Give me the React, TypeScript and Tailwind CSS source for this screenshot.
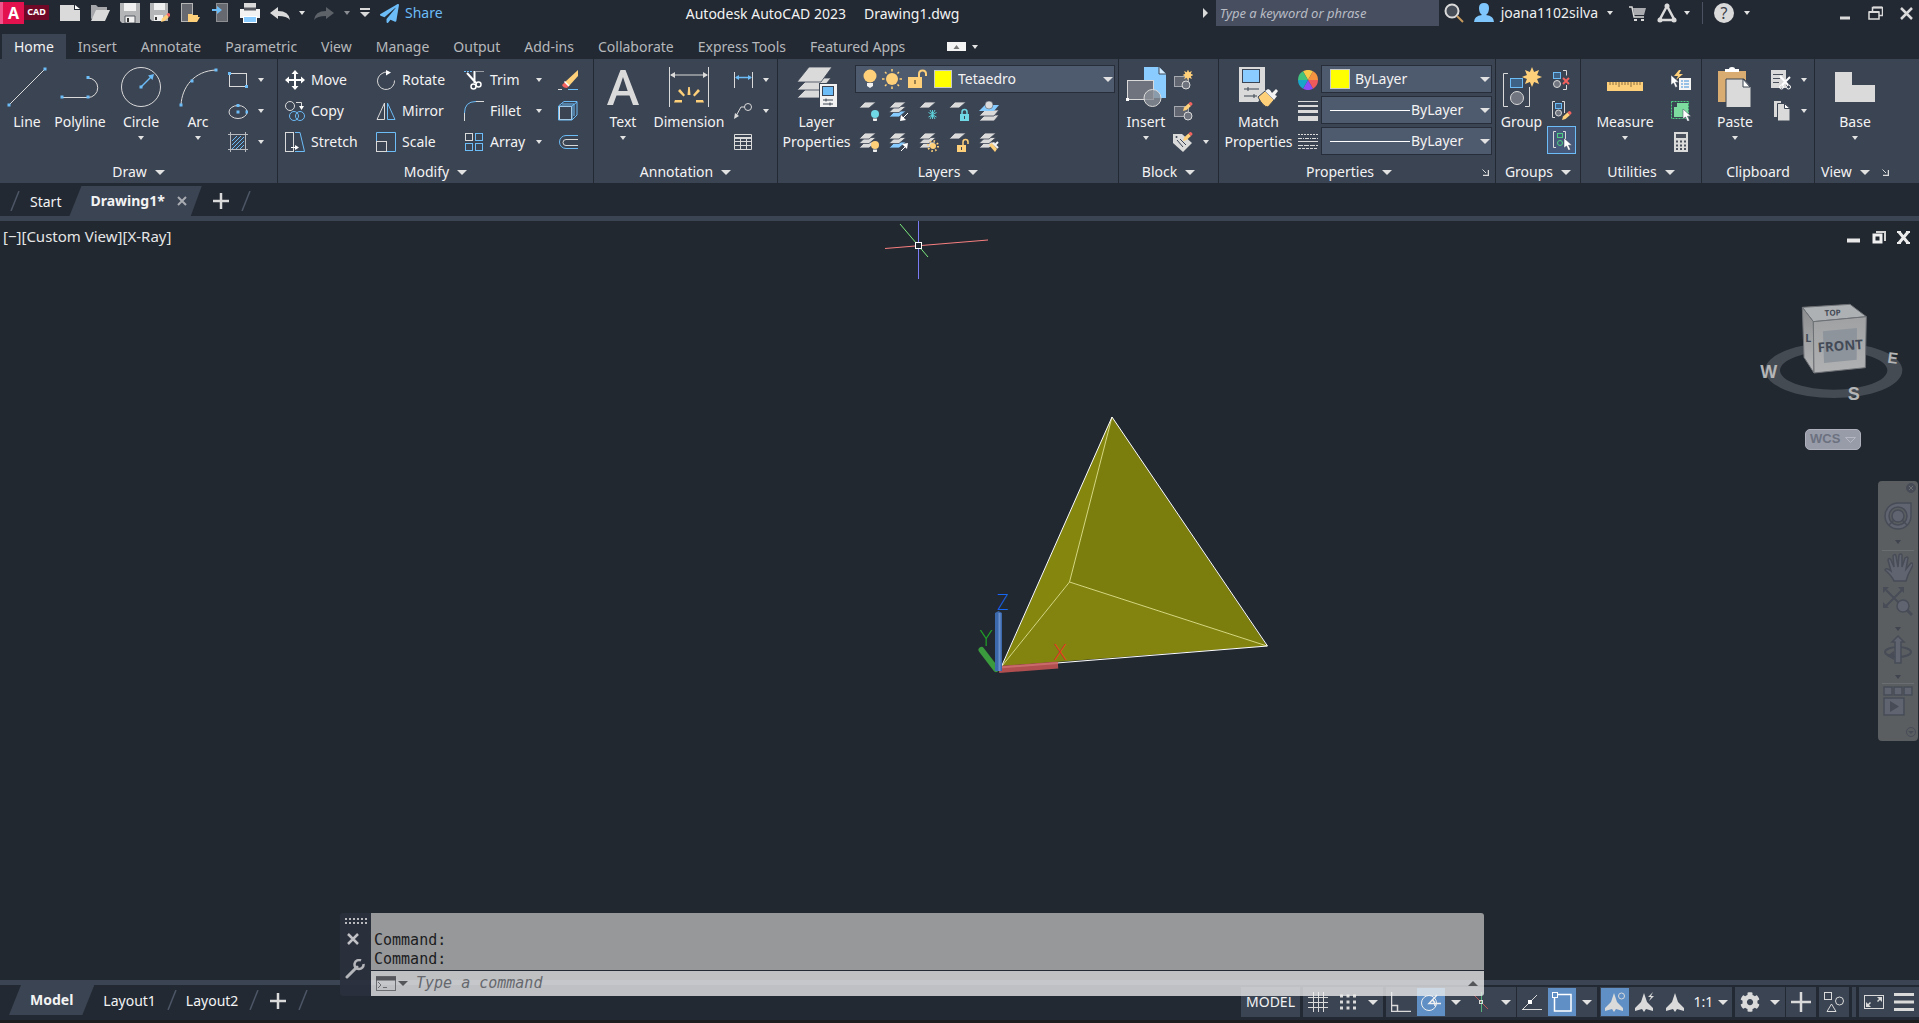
import type { ReactNode } from 'react';
import { FaCog, FaPaperPlane } from 'react-icons/fa';

const G = '#dadada';
const B = '#6cbcf7';
const Y = '#ffd07a';

type IconProps = { w?: number; h?: number; vb?: string; children: ReactNode };

function Icon({ w = 20, h = w, vb, children }: IconProps) {
    return (
        <svg
            className="shrink-0"
            width={w}
            height={h}
            viewBox={vb ?? `0 0 ${w} ${h}`}
            fill="none"
            stroke={G}
            aria-hidden="true"
        >
            {children}
        </svg>
    );
}

function Caret({ wide = false, dim = false, up = false }: { wide?: boolean; dim?: boolean; up?: boolean }) {
    return (
        <Icon w={wide ? 10 : 6} h={wide ? 5 : 4} vb={up ? '0 0 10 5' : wide ? '0 0 10 5' : '0 0 6 4'}>
            <path
                d={up ? 'M5 0L10 5H0z' : wide ? 'M0 0H10L5 5z' : 'M0 0H6L3 4z'}
                fill={up ? '#55565a' : dim ? '#8b8e93' : '#e2e2e2'}
                stroke="none"
            />
        </Icon>
    );
}

// square grip shown on the end points of drawing icons
function Grip({ x, y }: { x: number; y: number }) {
    return <rect x={x - 1.5} y={y - 1.5} width="3" height="3" fill={B} stroke="none" />;
}

function Pencil({ x, y }: { x: number; y: number }) {
    return (
        <g transform={`translate(${x} ${y})`} stroke="none">
            <path d="M0 9l1-3.500L5.500 1.500 8 4 3.500 8z" fill={Y} />
            <path d="M5.500 1.500L7 0q2.500 0 2.500 2.500L8 4z" fill="#f2625f" />
        </g>
    );
}

function Cursor({ x, y }: { x: number; y: number }) {
    return (
        <path
            transform={`translate(${x} ${y})`}
            d="M0 0v10l2.500-2 2 4.500 2-1L4.500 7.200H8z"
            fill="#fff"
            stroke="#3b4453"
            strokeWidth=".5"
        />
    );
}

function Burst({ x, y, r }: { x: number; y: number; r: number }) {
    const pts = Array.from({ length: 16 }, (_, i) => {
        const a = (i * Math.PI) / 8;
        const d = i % 2 ? r * 0.55 : r;
        return `${x + d * Math.sin(a)},${y - d * Math.cos(a)}`;
    }).join(' ');
    return <polygon points={pts} fill={Y} stroke="none" />;
}

/* ---------- layer glyph parts ---------- */

function Sheet({ y, fill = G }: { y: number; fill?: string }) {
    return <path d={`M0 ${y + 6}L6 ${y}H17L10 ${y + 6}z`} fill={fill} stroke="#3b4453" strokeWidth=".8" />;
}

function Stack({ blue = false }: { blue?: boolean }) {
    return (
        <>
            <Sheet y={10} fill={blue ? '#86cbff' : G} />
            <Sheet y={5.5} />
            <Sheet y={1} />
        </>
    );
}

function Bulb({ x, y, fill }: { x: number; y: number; fill: string }) {
    return (
        <g stroke="none">
            <circle cx={x} cy={y} r="4" fill={fill} />
            <path d={`M${x - 2} ${y + 4.500}h4v2l-2 2-2-2z`} fill="#f0f0f0" />
        </g>
    );
}

function Padlock({ x, y, fill, open = false }: { x: number; y: number; fill: string; open?: boolean }) {
    return (
        <g>
            <rect x={x} y={y} width="9" height="7" fill={fill} stroke="none" />
            <path
                d={open ? `M${x + 6} ${y}v-3q0-2.500 2.500-2.500t2.500 2.500v2` : `M${x + 2} ${y}v-2q0-2.500 2.500-2.500t2.500 2.500v2`}
                stroke={fill}
                strokeWidth="1.500"
            />
            <path d={`M${x + 4.500} ${y + 2}v3`} stroke="#3b4453" />
        </g>
    );
}

const bigIcons = {
    line: <Icon w={40}><path d="M2 38L38 2" /><Grip x={2} y={38} /><Grip x={38} y={2} /></Icon>,
    polyline: (
        <Icon w={40}>
            <path d="M2 30.500H28a9.500 9.500 0 000-19.500" />
            <Grip x={2} y={30} /><Grip x={28} y={30} /><Grip x={28} y={10.5} />
        </Icon>
    ),
    circle: (
        <Icon w={40}>
            <circle cx="20" cy="20" r="19.500" />
            <path d="M20 20L30 10" stroke={B} strokeWidth="1.500" />
            <path d="M33 7l-1.500 6-4.500-4.500z" fill={B} stroke="none" />
            <Grip x={20} y={20} />
        </Icon>
    ),
    arc: (
        <Icon w={40}>
            <path d="M3 38C4 20 16 4 38 3" />
            <Grip x={3} y={38} /><Grip x={14} y={14} /><Grip x={38} y={3} />
        </Icon>
    ),
    text: <Icon w={40}><path d="M4 38L17.500 3h5L36 38h-6l-3.500-9.500h-13L10 38zM15.300 24h9.400L20 10z" fill={G} stroke="none" /></Icon>,
    dimension: (
        <Icon w={40}>
            <path d="M.5 0v40M39.500 0v40M2 8h36" />
            <path d="M1 8l5-3v6zM39 8l-5-3v6z" fill={G} stroke="none" />
            <g fill={Y} stroke="none">
                <path d="M18.500 28l.7-8h1.600l.7 8zM9 24l2-2 5 6-1.500 1.500zM31 24l-2-2-5 6 1.500 1.500zM6 33h7v2.500H5zM34 33h-7v2.500h8z" />
            </g>
        </Icon>
    ),
    layer: (
        <Icon w={40}>
            <g fill={G} stroke="#3b4453" strokeWidth=".8">
                <path d="M0 31L12 19H34L24 31z" />
                <path d="M0 23L12 11H34L24 23z" />
                <path d="M0 15L12 0H35L24 15z" />
            </g>
            <rect x="22.500" y="16.500" width="18" height="24" fill="#f2f2f2" stroke="#3b4453" />
            <rect x="25.500" y="19.500" width="11" height="9" fill={B} stroke="#3b4453" />
            <path d="M26 33h10M26 37h10M29 31.500v3M33 35.500v3" stroke="#3b4453" />
        </Icon>
    ),
    insert: (
        <Icon w={40}>
            <path d="M18 0H33L40 7V31H18z" fill="#8accff" stroke="none" />
            <path d="M33 0v7h7" fill="#d6edff" stroke="#3b4453" />
            <rect x="1.500" y="13.500" width="26" height="19" fill="#6f737d" />
            <circle cx="26.500" cy="31" r="8.500" fill="#8a8e96" fillOpacity=".8" />
            <rect x="0" y="31" width="3" height="3" fill="#fff" stroke="none" />
        </Icon>
    ),
    match: (
        <Icon w={40}>
            <path d="M0 0H26V26L19 35H0z" fill={G} stroke="none" />
            <rect x="3.500" y="2.500" width="17" height="13" fill="#8accff" stroke="#3b4453" />
            <path d="M5 22h15M5 29h13M9 20v4M15 27v4" stroke="#3b4453" />
            <path d="M19 30l7-6 9 9-6 7q-5 0-10-10z" fill={Y} stroke="#3b4453" />
            <path d="M26 24l3-2 2 1 2 3 4-4 2 2-3 4 2 1-3 4z" fill="#f4f4f4" stroke="none" />
        </Icon>
    ),
    group: (
        <Icon w={40}>
            <path d="M6 6.500H1.500v33H6M23 39.500h4.500V20" />
            <rect x="8.500" y="11.500" width="12" height="9" fill="#3d6285" stroke={B} />
            <circle cx="15" cy="31" r="6.500" fill="#70757f" />
            <Burst x={30} y={10} r={10} />
        </Icon>
    ),
    measure: (
        <Icon w={40}>
            <rect x="2" y="15" width="36" height="9" fill={Y} stroke="none" />
            <path d="M5 15v3M8 15v3M11 15v3M14 15v5M17 15v3M20 15v3M23 15v3M26 15v5M29 15v3M32 15v3M35 15v3" stroke="#8a6f3d" />
        </Icon>
    ),
    paste: (
        <Icon w={40}>
            <rect x="3" y="4" width="28" height="31" fill="#d9ad72" stroke="none" />
            <path d="M10 5V2h4q0-2 3-2t3 2h4v3z" fill="#fff" stroke="none" />
            <path d="M11 12H29L36 20V41H11z" fill={G} stroke="#3b4453" />
            <path d="M28 12v8h7z" fill="#fff" stroke="#3b4453" />
        </Icon>
    ),
    base: <Icon w={40}><path d="M0 5H17V18H40V35H0z" fill={G} stroke="none" /></Icon>,
};

const icons = {
    rect: <Icon><rect x="1.500" y="3.500" width="17" height="13" /><Grip x={1.5} y={3.5} /><Grip x={18.5} y={16.5} /></Icon>,
    ellipse: <Icon><ellipse cx="10" cy="11" rx="9" ry="6.500" /><Grip x={10} y={4.5} /><Grip x={10} y={11} /><Grip x={19} y={11} /></Icon>,
    hatch: (
        <Icon>
            <path d="M4 9l5-5M4 13l9-9M4 17L16 5M8 17l8-8M12 17l4-4" stroke={B} />
            <path d="M2.500 0v20M17.500 0v20M0 2.500h20M0 17.500h20" stroke="#b8bbc0" />
        </Icon>
    ),
    move: <Icon><path d="M10 3v14M3 10h14" stroke="#fff" strokeWidth="2" /><path d="M10 0l3.500 4h-7zM10 20l3.500-4h-7zM0 10l4-3.500v7zM20 10l-4-3.500v7z" fill="#fff" stroke="none" /></Icon>,
    copy: (
        <Icon>
            <circle cx="5" cy="5" r="4.500" />
            <path d="M11 1.500h5.500V6" /><path d="M14 5h5l-2.500 4z" fill="#fff" stroke="none" />
            <circle cx="9" cy="15" r="4.500" stroke={B} /><circle cx="15" cy="15" r="4.500" stroke={B} />
        </Icon>
    ),
    stretch: (
        <Icon>
            <path d="M10 .5h5L19.500 19.500H10" stroke={B} />
            <rect x=".5" y=".5" width="8" height="19" />
            <path d="M6 15.500h5" stroke="#fff" /><path d="M10 13l4 2.500-4 2.500z" fill="#fff" stroke="none" />
        </Icon>
    ),
    rotate: <Icon><path d="M6 3.500A8.500 8.500 0 1018.500 10.500" /><path d="M6 3.500Q8 2 11 2" /><path d="M10 0l5 2.500-5 3z" fill="#fff" stroke="none" /></Icon>,
    mirror: <Icon><path d="M8.500 2v16.500H1z" /><path d="M11.500 2v16.500H19z" stroke={B} /></Icon>,
    scale: <Icon><path d="M.5 10V.5h19v19H11" stroke={B} /><rect x=".5" y="9.500" width="10" height="10" /></Icon>,
    trim: (
        <Icon>
            <path d="M0 1.500h9" stroke={B} strokeDasharray="2 1" /><path d="M12 1.500h8" stroke="#9a9da3" />
            <path d="M3 3l9 10M10.500 1v12" stroke="#fff" strokeWidth="2" />
            <circle cx="9.500" cy="16.500" r="2.500" stroke="#fff" strokeWidth="1.500" /><circle cx="14.500" cy="14.500" r="2.500" stroke="#fff" strokeWidth="1.500" />
        </Icon>
    ),
    fillet: <Icon><path d="M12 .5h8M.5 12v8" /><path d="M.5 12Q.5 .5 12 .5" stroke={B} /></Icon>,
    array: <Icon><rect x="1.500" y="1.500" width="7" height="7" /><g stroke={B}><rect x="11.500" y="1.500" width="7" height="7" /><rect x="1.500" y="11.500" width="7" height="7" /><rect x="11.500" y="11.500" width="7" height="7" /></g></Icon>,
    erase: (
        <Icon>
            <path d="M20 0v6L11 16l-4-4z" fill={Y} stroke="none" /><path d="M7 12l4 4-2 2q-4 0-5-3z" fill="#f2625f" stroke="none" />
            <path d="M6.500 11.500l4.500 4.500" stroke="#fff" strokeWidth="1.500" />
            <path d="M0 19.500h4" /><path d="M10 19.500h10" stroke={B} />
        </Icon>
    ),
    explode: <Icon><rect x="1.500" y="5.500" width="12" height="13" /><path d="M.5 19V5L6 .5h13V14l-5 5zM1 5h13l5-4M14 5v14M4 3h12v12" stroke={B} /></Icon>,
    offset: <Icon><path d="M20 3.500H8a6.500 6.500 0 000 13h12" stroke={B} /><path d="M20 7.500H8a3 3 0 000 6h12" /></Icon>,
    linear: <Icon><path d="M1.500 2v16M19.500 2v16" /><path d="M3 7.500h15" stroke={B} strokeWidth="1.500" /><path d="M2 7.500l4-2.500v5zM19 7.500l-4-2.500v5z" fill={B} stroke="none" /></Icon>,
    leader: <Icon><circle cx="15" cy="6" r="3.500" /><path d="M11.500 6H8L3 15" /><path d="M1 18l1-6 4 3z" fill={G} stroke="none" /></Icon>,
    table: <Icon><path d="M1.500 2.500h17v15h-17zM1 9.500h18M1 13.500h18M7.500 7v11M13.500 7v11" /><path d="M1 6h18" strokeWidth="2" /></Icon>,
    layOff: <Icon><Sheet y={1} /><Bulb x={16} y={13} fill="#6fd8e4" /></Icon>,
    layIso: <Icon><Stack blue /><path d="M19 12l-5 5" stroke="#fff" /><path d="M11 20l1-6 5 5z" fill="#fff" stroke="none" /></Icon>,
    layFreeze: <Icon><Sheet y={1} /><path d="M13.500 9v9M9.500 11.500l8 4.500M17.500 11.500l-8 4.500M11 9l5 9M16 9l-5 9" stroke="#5ecfd8" /></Icon>,
    layLock: <Icon><Sheet y={1} /><Padlock x={11} y={13} fill="#6fd8e4" /></Icon>,
    layCurrent: (
        <Icon>
            <g fill={G} stroke="#3b4453" strokeWidth=".8">
                <path d="M0 20l6-6h14l-5 6z" /><path d="M0 15l6-6h14l-5 6z" />
            </g>
            <path d="M0 10l6-6h14l-5 6z" fill="#86cbff" stroke="none" />
            <circle cx="10" cy="4" r="4" fill={G} stroke="#3b4453" strokeWidth=".5" />
        </Icon>
    ),
    layOn: <Icon><Stack /><Bulb x={16} y={13} fill={Y} /></Icon>,
    layUniso: <Icon><Stack blue /><path d="M12 19l5-5" stroke="#fff" /><path d="M19 11l-1 6-5-5z" fill="#fff" stroke="none" /></Icon>,
    layThaw: <Icon><Stack /><circle cx="14" cy="14" r="3" fill={Y} stroke="none" /><circle cx="14" cy="14" r="5" stroke={Y} strokeWidth="2" strokeDasharray="1.500 2.420" /></Icon>,
    layUnlock: <Icon><Sheet y={1} /><Padlock x={8} y={13} fill={Y} open /></Icon>,
    layMatch: <Icon><Stack /><path d="M10 13l3-2 5 6-2 3z" fill={Y} stroke="none" /><path d="M14 11l5 5M19 10l-3 3" stroke="#f4f4f4" strokeWidth="2" /></Icon>,
    blkCreate: <Icon><rect x="1.500" y="6.500" width="14" height="10" fill="#60656f" stroke="#a5a8ae" /><circle cx="13" cy="15" r="4" fill="#6f737d" /><Burst x={15} y={5} r={5.5} /></Icon>,
    blkEdit: <Icon><rect x="1.500" y="5.500" width="14" height="10" fill="#60656f" stroke="#a5a8ae" /><circle cx="15" cy="15" r="4" fill="#6f737d" /><Pencil x={10} y={1} /></Icon>,
    blkAttr: <Icon><path d="M0 2h9l10 9-9 9L0 11z" fill={G} stroke="none" /><path d="M4 8l6 7M7 7l6 6" stroke="#3b4453" /><circle cx="3.500" cy="5" r="1" fill="#3b4453" stroke="none" /><Pencil x={10} y={0} /></Icon>,
    colors: (
        <Icon>
            <g stroke="none">
                <path d="M10 10L5 1.340A10 10 0 0115 1.340z" fill="#f7c948" />
                <path d="M10 10L15 1.340A10 10 0 0120 10z" fill="#f59440" />
                <path d="M10 10H20A10 10 0 0115 18.660z" fill="#ef5a5a" />
                <path d="M10 10L15 18.660A10 10 0 015 18.660z" fill="#8b4df5" />
                <path d="M10 10L5 18.660A10 10 0 010 10z" fill="#18a6c9" />
                <path d="M10 10H0A10 10 0 015 1.340z" fill="#43c27b" />
            </g>
        </Icon>
    ),
    weights: <Icon><path d="M0 .5h20" /><path d="M0 5h20" strokeWidth="2" /><path d="M0 10.500h20" strokeWidth="3" /><path d="M0 17.500h20" strokeWidth="5" /></Icon>,
    types: <Icon><path d="M0 2.500h20" strokeDasharray="2 1" /><path d="M0 6.500h20" strokeDasharray="4 1 1 1" /><path d="M0 9.500h20" /><path d="M0 13.500h20" strokeDasharray="5 1" /><path d="M0 16.500h20" strokeDasharray="3 1" /></Icon>,
    ungroup: <Icon><rect x="1.500" y="2.500" width="7" height="6" fill="#3d6285" stroke={B} /><circle cx="5" cy="14" r="3.500" fill="#70757f" /><path d="M11 .5h3.500v5M14.500 15v4.500H11" /><path d="M11 8l6 6M17 8l-6 6" stroke="#f2625f" strokeWidth="2" /></Icon>,
    groupEdit: <Icon><path d="M3 .5H.5v16H3M10 .5h2.500V12" /><rect x="3.500" y="2.500" width="6" height="5" fill="#3d6285" stroke={B} /><circle cx="6.500" cy="12" r="3" fill="#70757f" /><Pencil x={10} y={10} /></Icon>,
    groupSelect: <Icon><path d="M4 1.500H1.500v16H4M11 1.500h2.500V9" /><rect x="5.500" y="3.500" width="5" height="4" stroke="#4fcf83" /><circle cx="8" cy="13" r="2.500" stroke="#4fcf83" /><Cursor x={12} y={8} /></Icon>,
    quick: <Icon><path d="M8 0L3 6h4L5 10l7-6H8l2-4z" fill={Y} stroke="none" /><Cursor x={0} y={5} /><rect x="8" y="8" width="12" height="12" fill="#f4f4f4" stroke="none" /><path d="M10 11h2M10 14h2M10 17h2M13 11h5M13 14h5M13 17h5" stroke="#3b8fd8" /></Icon>,
    selectAll: <Icon><rect x=".5" y=".5" width="17" height="17" stroke="#4fcf83" strokeDasharray="2 1" /><path d="M3 6h3V2h11v11h-3v3H3z" fill="#7ddba0" stroke="none" /><Cursor x={12} y={8} /></Icon>,
    calc: <Icon><rect x="3" y="0" width="14" height="20" fill={G} stroke="none" /><rect x="5" y="2" width="10" height="4" fill="#4a505b" stroke="none" /><path d="M5 9.500h10M5 13.500h10M5 17h10" stroke="#4a505b" strokeWidth="2" strokeDasharray="2 2" /></Icon>,
    cut: <Icon><path d="M0 0h15v18H0z" fill={G} stroke="none" /><path d="M2 4.500h10M2 8.500h7M2 12.500h6" stroke="#4a505b" /><path d="M9 6l8 9M19 7l-8 8" stroke="#fff" strokeWidth="2" /><circle cx="10.500" cy="17" r="2" stroke="#fff" /><circle cx="17.500" cy="17" r="2" stroke="#fff" /></Icon>,
    copyclip: <Icon><path d="M3 0h7v16H3z" fill={G} stroke="none" /><path d="M6.500 2.500H14l5 5V20H6.500z" fill={G} stroke="#3b4453" /><path d="M13.500 2.500v5H19z" fill="#fff" stroke="#3b4453" /></Icon>,
};

const quickAccess: [string, ReactNode][] = [
    ['New', <Icon><path d="M0 2h14v5h6v11H0z" fill={G} stroke="none" /><path d="M15 2l5 4h-5z" fill="#fff" stroke="none" /></Icon>],
    ['Open', <Icon><path d="M1 16V2h5l2 2h9v4" fill="#a5a7aa" stroke="none" /><path d="M1 18L6 7h14l-5 11z" fill={G} stroke="none" /></Icon>],
    ['Save', <Icon><path d="M0 0h20v20H2l-2-2z" fill="#b4b5b7" stroke="none" /><path d="M4 0h12v8H4z" fill="#f0f0f0" stroke="none" /><path d="M5 13h10v7H5z" fill="#f0f0f0" stroke="#55585e" /><path d="M8 15v4" stroke="#333" strokeWidth="2" /></Icon>],
    ['Save As', <Icon><path d="M0 0h18v18H2l-2-2z" fill="#b4b5b7" stroke="none" /><path d="M4 0h11v7H4z" fill="#f0f0f0" stroke="none" /><path d="M4 12h9v6H4z" fill="#f0f0f0" stroke="none" /><path d="M6 14v3" stroke="#333" strokeWidth="2" /><Pencil x={11} y={10} /></Icon>],
    ['Open from Web & Mobile', <Icon><rect x="1.500" y=".5" width="11" height="18" fill="#66696f" stroke="#b5b5b5" /><path d="M8 19v-8h4l1 1h5v2h2l-3 5z" fill={Y} stroke="none" /></Icon>],
    ['Save to Web & Mobile', <Icon><rect x="6.500" y=".5" width="11" height="18" fill="#66696f" stroke="#8d8f93" /><path d="M2 7h6" stroke={B} strokeWidth="2" /><path d="M7 3l5 4-5 4z" fill={B} stroke="none" /></Icon>],
    ['Plot', <Icon><path d="M4 0h12v5H4z" fill={G} stroke="none" /><path d="M0 6h20v9H0z" fill="#f2f2f2" stroke="none" /><path d="M4 4.500h12v3H4z" fill="#55585e" stroke="none" /><rect x="3.500" y="13.500" width="13" height="6" fill="#8accff" stroke="#fff" /></Icon>],
];

function BigButton({ icon, lines, caret = false, className }: { icon: ReactNode; lines: string[]; caret?: boolean; className: string }) {
    return (
        <button className={`flex shrink-0 flex-col items-center self-start pt-[3px] ${className}`}>
            {icon}
            <span className="mt-[5px] leading-5 whitespace-nowrap">
                {lines.map((l) => <span key={l} className="block">{l}</span>)}
            </span>
            {caret && <span className="mt-1"><Caret /></span>}
        </button>
    );
}

function SmallColumn({ items, className = '' }: { items: [string, ReactNode, boolean?][]; className?: string }) {
    return (
        <div className={`flex flex-col ${className}`}>
            {items.map(([name, icon, caret]) => (
                <div key={name} className="flex h-[31px] items-center gap-[10px]">
                    <button aria-label={name}>{icon}</button>
                    {caret && <button aria-label={`${name} options`}><Caret /></button>}
                </div>
            ))}
        </div>
    );
}

function Panel({ title, className, menu = true, launcher = false, start = false, children }: {
    title: string; className: string; menu?: boolean; launcher?: boolean; start?: boolean; children: ReactNode;
}) {
    return (
        <section className={`relative flex flex-col border-[#222933] pt-[5px] ${className}`}>
            <div className="flex h-[93px]">{children}</div>
            <div className={`flex h-[26px] items-center gap-2 pt-1 ${start ? 'pl-[6px]' : launcher ? 'justify-center pr-4' : 'justify-center'}`}>
                <button className="flex items-center gap-2">{title}{menu && <Caret wide />}</button>
                {launcher && (
                    <button aria-label={`${title} settings`} className={start ? 'ml-1' : 'absolute right-1.5'}>
                        <Icon w={7}><path d="M.5 .5L4 4" /><path d="M6.500 1v5.500H1" strokeWidth="1.500" /></Icon>
                    </button>
                )}
            </div>
        </section>
    );
}

const modifyColumns: { className: string; tools: [string, ReactNode, boolean?][] }[] = [
    { className: 'w-[91px]', tools: [['Move', icons.move], ['Copy', icons.copy], ['Stretch', icons.stretch]] },
    { className: 'w-[88px]', tools: [['Rotate', icons.rotate], ['Mirror', icons.mirror], ['Scale', icons.scale]] },
    { className: 'w-[78px]', tools: [['Trim', icons.trim, true], ['Fillet', icons.fillet, true], ['Array', icons.array, true]] },
];

const layerTools: [string, ReactNode][][] = [
    [['Off', icons.layOff], ['Isolate', icons.layIso], ['Freeze', icons.layFreeze], ['Lock', icons.layLock], ['Make Current', icons.layCurrent]],
    [['Turn All On', icons.layOn], ['Unisolate', icons.layUniso], ['Thaw All', icons.layThaw], ['Unlock', icons.layUnlock], ['Match Layer', icons.layMatch]],
];

function Combo({ label, value, className, children }: { label: string; value: string; className: string; children: ReactNode }) {
    return (
        <label className={`my-px flex h-7 items-center border border-[#272e3a] bg-[#4e5a6e] ${className}`}>
            {children}
            <select aria-label={label} defaultValue={value} className="min-w-0 flex-1 appearance-none bg-transparent outline-none">
                <option>{value}</option>
            </select>
            <Caret wide />
        </label>
    );
}

function Ribbon() {
    return (
        <div className="flex h-[124px] bg-[#3b4453] text-[#f3f3f3]">
            <Panel title="Draw" className="w-[278px] border-r">
                <BigButton icon={bigIcons.line} lines={['Line']} className="w-[54px]" />
                <BigButton icon={bigIcons.polyline} lines={['Polyline']} className="w-[52px]" />
                <BigButton icon={bigIcons.circle} lines={['Circle']} caret className="w-[70px]" />
                <BigButton icon={bigIcons.arc} lines={['Arc']} caret className="w-11" />
                <SmallColumn className="pl-2" items={[['Rectangle', icons.rect, true], ['Ellipse', icons.ellipse, true], ['Hatch', icons.hatch, true]]} />
            </Panel>

            <Panel title="Modify" className="w-[316px] border-r">
                <div className="flex pl-[7px]">
                    {modifyColumns.map((col) => (
                        <div key={col.tools[0][0]} className={`flex flex-col ${col.className}`}>
                            {col.tools.map(([name, icon, caret]) => (
                                <div key={name} className="flex h-[31px] items-center justify-between">
                                    <button className="flex items-center gap-[6px]">{icon}{name}</button>
                                    {caret && <button aria-label={`${name} options`}><Caret /></button>}
                                </div>
                            ))}
                        </div>
                    ))}
                    <SmallColumn className="pl-4" items={[['Erase', icons.erase], ['Explode', icons.explode], ['Offset', icons.offset]]} />
                </div>
            </Panel>

            <Panel title="Annotation" className="w-[184px] border-r">
                <BigButton icon={bigIcons.text} lines={['Text']} caret className="w-[58px]" />
                <BigButton icon={bigIcons.dimension} lines={['Dimension']} className="w-[74px]" />
                <SmallColumn className="pl-[7px]" items={[['Linear', icons.linear, true], ['Leader', icons.leader, true], ['Table', icons.table]]} />
            </Panel>

            <Panel title="Layers" className="w-[341px] border-r">
                <BigButton icon={bigIcons.layer} lines={['Layer', 'Properties']} className="w-[77px]" />
                <div>
                    <Combo label="Layer" value="Tetaedro" className="mb-0.5 w-[260px] pr-px pl-[7px]">
                        <span className="mr-1.5 flex items-center gap-[5px]">
                            <Icon w={14} h={20}><circle cx="7" cy="7" r="6.500" fill={Y} stroke="none" /><path d="M4 14h6v3l-3 2-3-2z" fill="#f2f2f2" stroke="none" /></Icon>
                            <Icon>
                                <circle cx="10" cy="10" r="6" fill={Y} stroke="none" />
                                <path d="M10 0v2.500M10 17.500V20M0 10h2.500M17.500 10H20M3 3l1.500 1.500M15.500 15.500L17 17M17 3l-1.500 1.500M3 17l1.500-1.500" stroke={Y} strokeWidth="1.500" />
                            </Icon>
                            <Icon><rect x="1" y="8" width="14" height="11" fill={Y} stroke="none" /><path d="M12 8V5q0-3.500 3.500-3.500T19 5v2" stroke={Y} strokeWidth="2" /><path d="M8 11v4" stroke="#77663f" strokeWidth="1.500" /></Icon>
                            <span className="ml-0.5 size-[18px] border border-[#c9c9c9] bg-[#ffff00]" />
                        </span>
                    </Combo>
                    {layerTools.map((row) => (
                        <div key={row[0][0]} className="flex h-[31px] items-center gap-[10px] pl-1">
                            {row.map(([name, icon]) => <button key={name} aria-label={name}>{icon}</button>)}
                        </div>
                    ))}
                </div>
            </Panel>

            <Panel title="Block" className="w-[100px] border-r">
                <BigButton icon={bigIcons.insert} lines={['Insert']} caret className="w-[54px]" />
                <SmallColumn items={[['Create Block', icons.blkCreate], ['Edit Block', icons.blkEdit], ['Edit Attributes', icons.blkAttr, true]]} />
            </Panel>

            <Panel title="Properties" launcher className="w-[277px] border-r">
                <BigButton icon={bigIcons.match} lines={['Match', 'Properties']} className="w-[79px]" />
                <SmallColumn items={[['Colors', icons.colors], ['Lineweights', icons.weights], ['Linetypes', icons.types]]} />
                <div className="flex flex-col gap-px pl-[3px]">
                    <Combo label="Object color" value="ByLayer" className="w-[171px] pr-px pl-2">
                        <span className="mr-[5px] size-5 border border-[#c9c9c9] bg-[#ffff00]" />
                    </Combo>
                    <Combo label="Lineweight" value="ByLayer" className="w-[171px] pr-px pl-2">
                        <span className="mr-px h-px w-20 bg-white" />
                    </Combo>
                    <Combo label="Linetype" value="ByLayer" className="w-[171px] pr-px pl-2">
                        <span className="mr-px h-px w-20 bg-white" />
                    </Combo>
                </div>
            </Panel>

            <Panel title="Groups" className="w-[85px] border-r">
                <BigButton icon={bigIcons.group} lines={['Group']} className="w-[51px]" />
                <div className="flex flex-col items-center">
                    <button aria-label="Ungroup" className="flex h-[31px] items-center">{icons.ungroup}</button>
                    <button aria-label="Group Edit" className="flex h-[31px] items-center">{icons.groupEdit}</button>
                    <button aria-label="Group Selection" className="flex h-7 w-[29px] items-center justify-center border border-[#6cbcf7] bg-[#46597a]">{icons.groupSelect}</button>
                </div>
            </Panel>

            <Panel title="Utilities" className="w-[121px] border-r">
                <BigButton icon={bigIcons.measure} lines={['Measure']} caret className="w-[88px]" />
                <SmallColumn className="pl-0.5" items={[['Quick Select', icons.quick], ['Select All', icons.selectAll], ['Quick Calculator', icons.calc]]} />
            </Panel>

            <Panel title="Clipboard" menu={false} className="w-[113px] border-r">
                <BigButton icon={bigIcons.paste} lines={['Paste']} caret className="w-[66px]" />
                <SmallColumn className="pl-[3px]" items={[['Cut', icons.cut, true], ['Copy Clip', icons.copyclip, true]]} />
            </Panel>

            <Panel title="View" launcher start className="flex-1">
                <BigButton icon={bigIcons.base} lines={['Base']} caret className="w-20" />
            </Panel>
        </div>
    );
}

function TitleBar() {
    return (
        <header className="flex h-[34px] items-start justify-between">
            <div className="flex items-center">
                <div className="flex h-[26px] w-[60px] items-start pt-0.5 font-bold text-white">
                    <span className="flex h-[22px] w-6 items-center justify-center border-l-[3px] border-[#f0548a] bg-[#e3124f] text-base">A</span>
                    <span className="mt-[3px] flex h-[15px] w-[25px] items-center justify-center bg-[#6f0927] text-[9px]">CAD</span>
                </div>
                <div className="flex items-center gap-[10px]">
                    {quickAccess.map(([name, icon]) => <button key={name} aria-label={name}>{icon}</button>)}
                    <button aria-label="Undo"><Icon><path d="M0 10l8-6v4q11 0 12 9-3-4-12-4v3z" fill={G} stroke="none" /></Icon></button>
                    <button aria-label="Undo history" className="-mx-px"><Caret /></button>
                    <button aria-label="Redo"><Icon><path d="M20 10l-8-6v4Q1 8 0 17q3-4 12-4v3z" fill="#5d6269" stroke="none" /></Icon></button>
                    <button aria-label="Redo history"><Caret dim /></button>
                    <button aria-label="Customize toolbar"><Icon w={10}><path d="M0 1h10" strokeWidth="2" /><path d="M0 4h10L5 9z" fill={G} stroke="none" /></Icon></button>
                    <button className="flex items-center gap-[6px] text-[#6cbcf7]"><FaPaperPlane size={19} />Share</button>
                </div>
            </div>
            <h1 className="pt-1 text-[#f3f3f3]">Autodesk AutoCAD 2023<span className="ml-[18px]">Drawing1.dwg</span></h1>
            <div className="flex h-[26px] items-center text-[#f0f0f0]">
                <Icon w={5} h={10}><path d="M0 0l5 5-5 5z" fill={G} stroke="none" /></Icon>
                <input aria-label="Search" placeholder="Type a keyword or phrase" className="ml-2 h-[26px] w-[223px] bg-[#464e60] px-1 text-[13px] italic outline-none placeholder:text-[#b9bcc4]" />
                <button aria-label="Find" className="ml-[5px]"><Icon><circle cx="8" cy="8" r="6.500" fill="#474d57" strokeWidth="2" /><path d="M13 13l6 6" stroke="#c99a5e" strokeWidth="2" /></Icon></button>
                <button className="ml-[10px] flex items-center gap-[7px]">
                    <Icon><path d="M10 0q5 0 5 5t-3 7q8 1 8 7H0q0-6 8-7-3-2-3-7t5-5z" fill="#7fc6fd" stroke="none" /></Icon>
                    joana1102silva
                    <span className="ml-0.5"><Caret /></span>
                </button>
                <button aria-label="App Store" className="ml-4"><Icon w={18} h={20}><path d="M0 4h3l2 10h10" strokeWidth="1.500" /><path d="M4 5h13l-2 7H5z" fill="#a9abae" stroke="none" /><path d="M5 16h3v2H5zM12 16h3v2h-3z" fill={G} stroke="none" /></Icon></button>
                <button aria-label="Autodesk App" className="ml-[10px]"><Icon w={20}><path d="M10 3L2.500 17h15z" strokeWidth="2.500" /><circle cx="10" cy="3" r="2.500" fill={G} stroke="none" /><circle cx="3" cy="17" r="2.500" fill={G} stroke="none" /><circle cx="17" cy="17" r="2.500" fill={G} stroke="none" /></Icon></button>
                <button aria-label="App options" className="ml-[7px]"><Caret /></button>
                <span className="ml-3 h-[22px] w-px bg-[#4a5160]" />
                <button aria-label="Help" className="ml-[11px] flex size-5 items-center justify-center rounded-full bg-[#dadada] text-base leading-5 text-[#3a3f48]">?</button>
                <button aria-label="Help options" className="ml-[10px]"><Caret /></button>
                <button aria-label="Minimize" className="ml-[90px]"><Icon w={10} h={14}><path d="M0 12h10" strokeWidth="3" /></Icon></button>
                <button aria-label="Restore" className="ml-[18px]"><Icon w={15} h={14}><path d="M4.500 5V1.500h10v8H11" strokeWidth="1.500" /><rect x="1" y="6" width="10" height="7" strokeWidth="1.500" /><path d="M1 6h10M5 1.500h9" strokeWidth="2" /></Icon></button>
                <button aria-label="Close" className="mr-1.5 ml-[17px]"><Icon w={13}><path d="M1 1l11 11M12 1L1 12" strokeWidth="2.500" /></Icon></button>
            </div>
        </header>
    );
}

const ribbonTabs = ['Home', 'Insert', 'Annotate', 'Parametric', 'View', 'Manage', 'Output', 'Add-ins', 'Collaborate', 'Express Tools', 'Featured Apps'];

function Slash() {
    return <Icon w={10} h={20}><path d="M1 20L9 0" stroke="#4d5666" strokeWidth="1.500" /></Icon>;
}

function PlusIcon() {
    return <Icon w={16}><path d="M8 0v16M0 8h16" strokeWidth="2.500" /></Icon>;
}

function FileTabs() {
    return (
        <nav className="flex h-[38px] items-start border-b-[5px] border-[#3b4453] pt-[3px] text-[#f3f3f3]">
            <span className="mt-[5px] ml-[10px]"><Slash /></span>
            <button className="ml-[10px] h-8">Start</button>
            <div className="ml-2 flex h-[30px] items-center bg-[#3b4453] pr-[15px] pl-[21px] font-bold [clip-path:polygon(12px_0,100%_0,calc(100%-11px)_100%,0_100%)]">
                <button>Drawing1*</button>
                <button aria-label="Close Drawing1" className="ml-3"><Icon w={10}><path d="M1 1l8 8M9 1L1 9" stroke="#a9acb2" strokeWidth="2" /></Icon></button>
            </div>
            <button aria-label="New drawing" className="mt-[7px] ml-[11px]"><PlusIcon /></button>
            <span className="mt-[5px] ml-3"><Slash /></span>
        </nav>
    );
}

function ViewCube() {
    return (
        <div className="absolute top-[59px] right-0 flex w-[179px] flex-col items-center">
            <Icon w={179} h={133} vb="0 0 537 399">
                <defs>
                    <linearGradient id="cube-front" x1="0" y1="0" x2="0" y2="1">
                        <stop offset="0" stopColor="#9fa1a3" />
                        <stop offset="1" stopColor="#b0b1b2" />
                    </linearGradient>
                    <linearGradient id="cube-side" x1="0" y1="0" x2="0" y2="1">
                        <stop offset="0" stopColor="#8b8d8f" />
                        <stop offset="1" stopColor="#b5b6b7" />
                    </linearGradient>
                </defs>
                <path
                    d="M75 271a206 83 0 01412 0a206 83 0 01-412 0zM120 271a161 58 0 00322 0a161 58 0 00-322 0z"
                    fill="#454b53"
                    fillRule="evenodd"
                    stroke="none"
                />
                <g stroke="#6d7075" strokeWidth="3">
                    <path d="M187 82L330 73 379 110 220 125z" fill="#aeb1b3" />
                    <path d="M187 82L220 125 222 279 192 232z" fill="url(#cube-side)" />
                    <path d="M220 125L379 110 376 263 222 279z" fill="url(#cube-front)" />
                </g>
                <path d="M249 154L351 144 350 239 252 249z" fill="#8e949c" stroke="none" />
                <g fill="#434a56" stroke="none" fontFamily="Open Sans, Noto Sans, sans-serif" fontWeight="700" textAnchor="middle">
                    <text x="301" y="212" fontSize="40" transform="rotate(-4 301 200)">FRONT</text>
                    <text x="278" y="107" fontSize="24" transform="rotate(-3 278 98)">TOP</text>
                    <text x="205" y="187" fontSize="32">L</text>
                </g>
                <g fill="#b4b5b6" stroke="none" fontFamily="Liberation Sans, sans-serif" fontWeight="700" textAnchor="middle">
                    <text x="86" y="293" fontSize="54">W</text>
                    <text x="458" y="250" fontSize="46" transform="rotate(8 458 235)">E</text>
                    <text x="341" y="361" fontSize="54">S</text>
                </g>
            </Icon>
            <button className="mt-4 mr-[58px] flex h-[21px] w-14 items-center justify-between self-end rounded-[5px] border border-[#aeb1bb] bg-[#989ca9] px-1 font-[Liberation_Sans,sans-serif] text-[13px] font-bold text-[#6c7180]">
                WCS
                <Icon w={11} h={6}><path d="M.5 .5h10l-5 5z" stroke="#b6b9c4" /></Icon>
            </button>
        </div>
    );
}

function NavCaret() {
    return <span className="mt-[10px]"><Icon w={6} h={4}><path d="M0 0h6L3 4z" fill="#3f444e" stroke="none" /></Icon></span>;
}

function NavBar() {
    const c = '#474c57';
    return (
        <div className="absolute top-[260px] right-px flex h-[260px] w-10 flex-col items-center rounded-[4px] bg-[#5a5e61]">
            <button aria-label="Close navigation bar" className="mt-0.5 self-end pr-0.5"><Icon w={10}><circle cx="5" cy="5" r="4.500" fill={c} stroke={c} /><path d="M3 3l4 4M7 3L3 7" stroke="#6b6f74" /></Icon></button>
            <button aria-label="Steering wheel" className="mt-[9px]">
                <Icon w={28}><g stroke={c} strokeWidth="1.500" fill="#5f6470"><path d="M14 1h13v13a13 13 0 11-13-13z" /><circle cx="14" cy="14" r="9" fill="#5a5e61" /><circle cx="14" cy="14" r="6" /><path d="M10 18l-5 5M18 18l5 5" /></g></Icon>
            </button>
            <NavCaret />
            <hr className="mt-1.5 w-8 border-[#6a6e72]" />
            <button aria-label="Pan" className="mt-0.5">
                <Icon w={30}><path d="M11 28q-2-5-9-11 1-3 6 1L5 7q1-3 3 0l3 7-1-11q2-3 3 0l2 11 1-12q2-2 3 0v12l3-9q3-2 3 0l-2 11 5-6q2 0 2 2l-5 10-2 6z" fill="#5f6470" stroke={c} strokeWidth="1.500" /></Icon>
            </button>
            <button aria-label="Zoom extents" className="mt-1">
                <Icon w={30}><path d="M3 3l16 16M19 3L3 19" stroke={c} strokeWidth="2" /><path d="M0 0h6L0 6zM21 0h-6l6 6zM0 21v-6l6 6z" fill={c} stroke="none" /><circle cx="20" cy="19" r="6" fill="#5f6470" stroke={c} strokeWidth="1.500" /><path d="M24 23l5 5" stroke={c} strokeWidth="3" /></Icon>
            </button>
            <NavCaret />
            <button aria-label="Orbit" className="mt-1">
                <Icon w={30}><ellipse cx="15" cy="17" rx="13" ry="5" stroke={c} strokeWidth="2" /><path d="M12 28V7H9l6-6 6 6h-3v21z" fill="#5f6470" stroke={c} strokeWidth="1.500" /><path d="M4 21l7-5v9z" fill={c} stroke="none" /></Icon>
            </button>
            <NavCaret />
            <hr className="mt-1 w-8 border-[#6a6e72]" />
            <button aria-label="ShowMotion" className="mt-0.5">
                <Icon w={30}><g stroke={c} strokeWidth="1.500" fill="#5f6470"><path d="M1 1h8v8H1zM11 1h8v8h-8zM21 1h8v8h-8zM1 12h20v17H1z" /></g><path d="M7 15l9 5.500-9 5.500z" fill={c} stroke="none" /></Icon>
            </button>
            <button aria-label="Navigation bar options" className="mt-auto mb-1 self-end pr-0.5"><Icon w={10}><circle cx="5" cy="5" r="4.500" stroke={c} /><path d="M2 4h6L5 7z" fill={c} stroke="none" /></Icon></button>
        </div>
    );
}

function Canvas() {
    return (
        <main className="relative flex-1 overflow-hidden bg-[#212830]">
            <button className="pt-[5px] pl-[3px] text-[15px] leading-5 text-[#e6e6e6]">[−][Custom View][X-Ray]</button>

            <div className="absolute top-[9px] right-[9px] flex items-center gap-[11px]">
                <button aria-label="Minimize drawing"><Icon w={15} h={14}><path d="M1 10.500h13" stroke="#e8e8e8" strokeWidth="4" /></Icon></button>
                <button aria-label="Restore drawing"><Icon w={14}><path d="M4 2h9v9" stroke="#d5d5d5" strokeWidth="2" /><rect x="2" y="5" width="7" height="7" stroke="#f0f0f0" strokeWidth="3" /></Icon></button>
                <button aria-label="Close drawing"><Icon w={13}><path d="M2 1l9 11M11 1L2 12" stroke="#ececec" strokeWidth="3" /><path d="M0 1h4M9 1h4M0 12h4M9 12h4" stroke="#ececec" strokeWidth="2" /></Icon></button>
            </div>

            {/* crosshair */}
            <svg className="absolute top-0 left-[885px]" width="104" height="58" fill="none" aria-hidden="true">
                <path d="M0 27.500L103 19" stroke="#f87f7f" />
                <path d="M15 3l28 33" stroke="#7dea7d" />
                <path d="M33.500 0v58" stroke="#7b7bf5" />
                <rect x="30.500" y="21.500" width="6" height="6" fill="#212830" stroke="#fff" />
            </svg>

            {/* tetrahedron and UCS icon */}
            <svg className="absolute top-[179px] left-[960px]" width="330" height="290" fill="none" aria-hidden="true">
                <path d="M152 17L307 246 109.500 182z" fill="#7b7d0d" />
                <path d="M152 17L109.500 182 42 266z" fill="#84860e" />
                <path d="M109.500 182L307 246 42 266z" fill="#82840f" />
                <path d="M152 17L109.500 182 307 246M109.500 182L42 266" stroke="#d8da80" />
                <path d="M152 17L307.500 246 41 267.500z" stroke="#fff" />
                <path d="M21.500 250L36 269" stroke="#3b9a3d" strokeWidth="6" strokeLinecap="round" />
                <path d="M39 269.500L98 265" stroke="#b14f50" strokeWidth="7" />
                <path d="M39 267.500L98 263" stroke="#c96b6b" strokeWidth="2" />
                <path d="M35 213l3.500-2 3.500 2v58h-7z" fill="#3c68ac" />
                <path d="M39.500 213v58" stroke="#6a90cc" strokeWidth="2" />
                <g fontFamily="Inter, sans-serif" fontWeight="200" fontSize="21" textAnchor="middle">
                    <text x="43" y="210" fill="#1767f5">Z</text>
                    <text x="26" y="246" fill="#1fb424">Y</text>
                    <text x="100" y="260" fill="#f02a2a">X</text>
                </g>
            </svg>

            <ViewCube />
            <NavBar />
        </main>
    );
}

function CommandWindow() {
    return (
        <div className="absolute right-[435px] bottom-[27px] left-[340px] flex h-[83px] font-['DejaVu_Sans_Mono',monospace] text-[15px]">
            <div className="flex w-[31px] flex-col items-start rounded-l-[3px] bg-[#2b303ee6] pl-[5px]">
                <span className="mt-[5px]"><Icon w={22} h={6}><path d="M0 1h22M0 5h22" stroke="#b8babd" strokeWidth="2" strokeDasharray="2 2" /></Icon></span>
                <button aria-label="Close command line" className="mt-[9px] ml-0.5"><Icon w={12}><path d="M1 1l10 10M11 1L1 11" stroke="#c0c1c4" strokeWidth="2.500" /></Icon></button>
                <button aria-label="Customize" className="mt-[14px]"><Icon><path d="M2 18L12 8" stroke="#b4b6ba" strokeWidth="3" strokeLinecap="round" /><path d="M16 1.500A4.500 4.500 0 1018.500 5" stroke="#b4b6ba" strokeWidth="2.500" /></Icon></button>
            </div>
            <div className="flex flex-1 flex-col overflow-hidden rounded-r-[3px]">
                <div className="flex-1 border-b border-[#222933] bg-[#979899] pt-[18px] pl-[3px] leading-[19px] text-[#1c1d1f]">
                    <p>Command:</p>
                    <p>Command:</p>
                </div>
                <div className="flex h-[25px] items-center bg-[#f0f0f0c2] pr-[6px] pl-[5px]">
                    <button aria-label="Recent commands" className="flex items-center gap-0.5">
                        <Icon w={20} h={16}><rect x=".5" y=".5" width="19" height="14" stroke="#6b6d72" /><path d="M0 2.500h20" stroke="#54565b" strokeWidth="4" /><path d="M2 6l3 3-3 3M7 11.500h4" stroke="#6b6d72" /></Icon>
                        <Icon w={10} h={5}><path d="M0 0H10L5 5z" fill="#55565a" stroke="none" /></Icon>
                    </button>
                    <input aria-label="Command" placeholder="Type a command" className="ml-2 flex-1 bg-transparent pt-px italic outline-none placeholder:text-[#66686d]" />
                    <button aria-label="Command history"><Caret wide up /></button>
                </div>
            </div>
        </div>
    );
}

function Cell({ name, on = false, children }: { name: string; on?: boolean; children: ReactNode }) {
    return (
        <button aria-label={name} className={`mx-px flex h-7 w-7 items-center justify-center ${on ? 'bg-[#5f8fc4]' : ''}`}>{children}</button>
    );
}

function CaretCell({ name }: { name: string }) {
    return <button aria-label={name} className="flex h-7 w-5 items-center justify-center"><Caret wide /></button>;
}

function StatusGroup({ className = '', children }: { className?: string; children?: ReactNode }) {
    return <div className={`flex h-[30px] items-center bg-[#3b4453] ${className}`}>{children}</div>;
}

function StatusBar() {
    const scaleMark = <path d="M9 0l3 9 6 6v3l-7-2-2 3-2-3-7 2v-3l6-6z" fill={G} stroke="none" />;
    return (
        <footer className="flex h-[43px] items-start justify-between border-t-[5px] border-b-[3px] border-t-[#3b4453] border-b-[#1c1d1f] text-[#f3f3f3]">
            <nav className="flex h-8 items-start">
                <button className="ml-[9px] h-[30px] bg-[#3b4453] pr-[21px] pl-[21px] font-bold [clip-path:polygon(12px_0,100%_0,calc(100%-12px)_100%,0_100%)]">Model</button>
                <button className="ml-[9px] h-8">Layout1</button>
                <span className="mt-[5px] ml-[11px]"><Slash /></span>
                <button className="ml-[9px] h-8">Layout2</button>
                <span className="mt-[5px] ml-[11px]"><Slash /></span>
                <button aria-label="New layout" className="mt-2 ml-[11px]"><PlusIcon /></button>
                <span className="mt-[5px] ml-3"><Slash /></span>
            </nav>
            <div className="flex gap-[3px] pt-0.5">
                <StatusGroup><button className="w-[59px]">MODEL</button></StatusGroup>
                <StatusGroup>
                    <Cell name="Grid"><Icon><path d="M5.500 0v20M10.500 0v20M15.500 0v20M0 5.500h20M0 10.500h20M0 15.500h20" /></Icon></Cell>
                    <Cell name="Snap"><Icon w={16}><path d="M0 2h16M0 8h16M0 14h16" strokeWidth="3" strokeDasharray="3 3.500" /></Icon></Cell>
                    <CaretCell name="Snap settings" />
                </StatusGroup>
                <StatusGroup>
                    <Cell name="Ortho"><Icon><path d="M.5 0v19.500H20M.500 13.500h6v6" strokeWidth="1.500" /></Icon></Cell>
                    <Cell name="Polar tracking" on><Icon><circle cx="8" cy="11" r="7.500" stroke="#f0f0f0" /><path d="M20 11.500H8L16 3M11 8q3 1 3 6" stroke="#f0f0f0" strokeWidth="1.500" /></Icon></Cell>
                    <CaretCell name="Polar settings" />
                    <Cell name="Isometric"><Icon><path d="M3 3l14 14" stroke="#b85a5a" /><path d="M10.500 0v20" stroke="#57b079" /><rect x="8.500" y="8.500" width="3" height="3" /></Icon></Cell>
                    <CaretCell name="Isometric settings" />
                </StatusGroup>
                <StatusGroup className="-ml-0.5">
                    <Cell name="Object snap tracking"><Icon><path d="M0 17.500h20M1 17L15 3" /><rect x="6" y="8" width="4" height="4" fill="#fff" stroke="none" /></Icon></Cell>
                    <Cell name="Object snap" on><Icon><path d="M6 2.500h13v16.500H2.500V6" stroke="#fff" strokeWidth="1.500" /><rect x=".5" y=".5" width="5" height="5" stroke="#fff" /></Icon></Cell>
                    <CaretCell name="Object snap settings" />
                </StatusGroup>
                <StatusGroup>
                    <Cell name="Annotation visibility" on><Icon><g transform="translate(0 1)">{scaleMark}</g><circle cx="16.500" cy="4" r="3" fill="#5f8fc4" /></Icon></Cell>
                    <Cell name="Auto scale"><Icon><g transform="translate(0 1)">{scaleMark}</g><path d="M18 0l-5 5h3l-2 4 5-5h-3z" fill={G} stroke="none" /></Icon></Cell>
                    <Cell name="Annotation scale"><Icon w={18} h={20}><g transform="translate(0 1)">{scaleMark}</g></Icon></Cell>
                    <button className="flex w-[42px] items-center justify-center gap-[5px]">1:1<Caret wide /></button>
                </StatusGroup>
                <StatusGroup>
                    <Cell name="Workspace"><FaCog size={20} color={G} /></Cell>
                    <CaretCell name="Workspace switching" />
                </StatusGroup>
                <StatusGroup className="-ml-0.5"><Cell name="Annotation monitor"><Icon><path d="M10 0v20M0 10h20" strokeWidth="2.500" /></Icon></Cell></StatusGroup>
                <StatusGroup><Cell name="Isolate objects"><Icon><rect x=".5" y=".5" width="7" height="7" /><circle cx="15.500" cy="9" r="4" /><path d="M7.500 12l4.500 7.500H3z" /></Icon></Cell></StatusGroup>
                <StatusGroup className="w-1" />
                <StatusGroup>
                    <Cell name="Clean screen"><Icon><rect x=".5" y="3.500" width="19" height="13" /><path d="M2 15v-5l2 2 2-2 1 1-2 2 2 2zM18 5v5l-2-2-2 2-1-1 2-2-2-2z" fill={G} stroke="none" /></Icon></Cell>
                    <Cell name="Customization"><Icon><path d="M0 2.500h20M0 10h20M0 17.500h20" strokeWidth="3" /></Icon></Cell>
                </StatusGroup>
            </div>
        </footer>
    );
}

export default function App() {
    return (
        <div className="relative flex min-h-screen flex-col overflow-hidden bg-[#222933] font-['Noto_Sans',sans-serif] text-sm">
            <TitleBar />
            <nav className="flex h-[25px] items-stretch pl-0.5 text-[#b6b8bb]">
                {ribbonTabs.map((tab) => (
                    <button key={tab} className={`px-3 ${tab === 'Home' ? 'bg-[#3b4453] text-[#f3f3f3]' : ''}`}>{tab}</button>
                ))}
                <button aria-label="Minimize ribbon" className="ml-[30px] flex items-center gap-[6px]">
                    <Icon w={19} h={9}><rect width="19" height="9" fill="#f4f4f4" stroke="none" /><path d="M9.500 3l3 4h-6z" fill="#777" stroke="none" /></Icon>
                    <Caret />
                </button>
            </nav>
            <Ribbon />
            <FileTabs />
            <Canvas />
            <StatusBar />
            <CommandWindow />
        </div>
    );
}
